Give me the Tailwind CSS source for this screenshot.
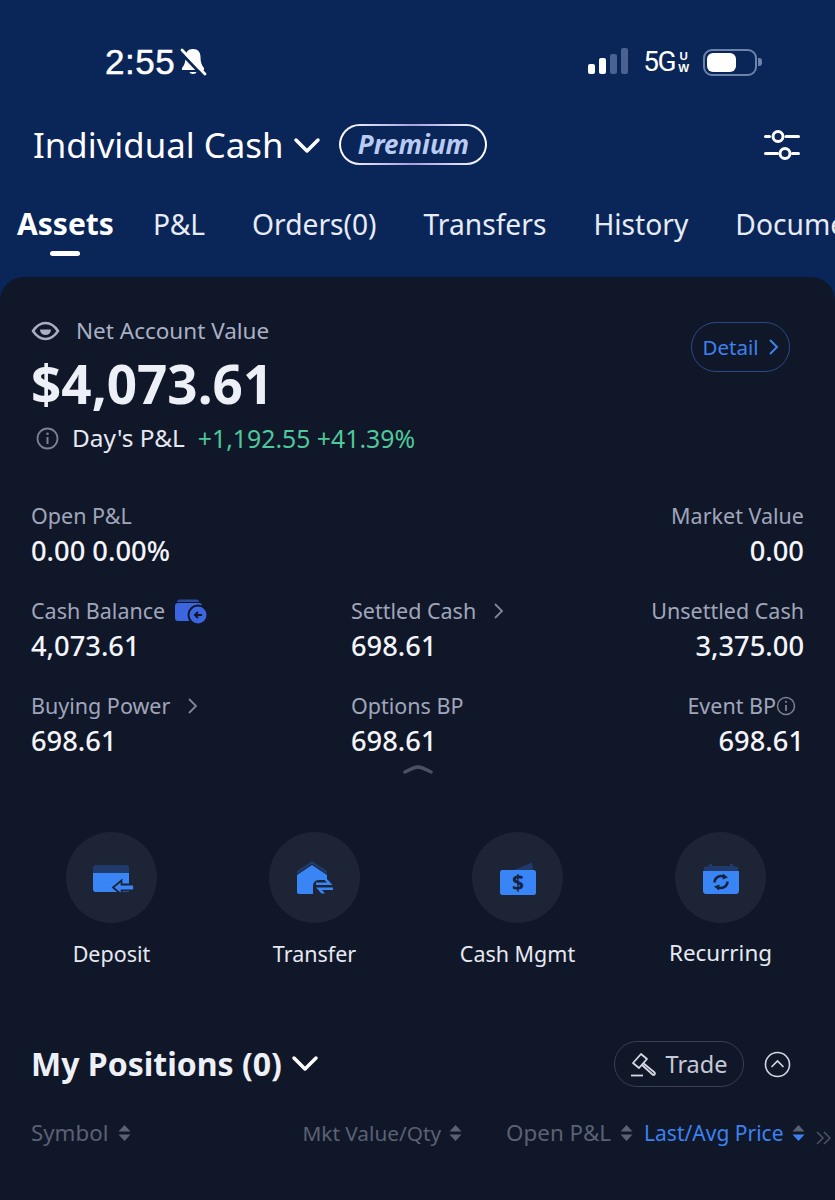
<!DOCTYPE html>
<html lang="en">
<head>
    <meta charset="UTF-8">
    <meta name="viewport" content="width=device-width, initial-scale=1.0">
    <title>Individual Cash - Assets</title>
    <script src="https://cdn.jsdelivr.net/npm/@tailwindcss/browser@4"></script>
</head>
<body class="bg-[#0a2558] font-['Noto_Sans',sans-serif] text-white">
<div class="w-[835px] h-[1200px] overflow-hidden flex flex-col">

    <!-- Status bar -->
    <div class="h-[100px] shrink-0 pl-[105px] pr-[73px] pt-[43px] flex items-start justify-between font-['Liberation_Sans',sans-serif]">
        <div class="flex items-center h-[38px] gap-[6px]">
            <span class="text-[35px] leading-[38px] text-white tracking-[0.5px] [-webkit-text-stroke:0.5px_white]">2:55</span>
            <svg width="28" height="30" viewBox="0 0 28 30" class="-ml-[2px]">
                <path d="M14 2c-5 0-7.500 3.500-7.500 8 0 5-1 8-3.500 11v2h22v-2c-2.500-3-3.500-6-3.500-11 0-4.500-2.500-8-7.500-8z" fill="#fff"/>
                <path d="M10.500 25h7c-.5 2.500-6.500 2.500-7 0z" fill="#fff"/>
                <path d="M1 5l22 23" stroke="#0a2558" stroke-width="3"/>
                <path d="M3 3l23 24" stroke="#fff" stroke-width="2.800" stroke-linecap="round"/>
            </svg>
        </div>
        <div class="flex items-center h-[38px]">
            <div class="flex items-end gap-[4px] h-[26px] mr-[15px] -mt-[2px]">
                <div class="w-[7px] h-[10px] rounded-[2px] bg-white"></div>
                <div class="w-[7px] h-[16px] rounded-[2px] bg-white"></div>
                <div class="w-[7px] h-[20px] rounded-[2px] bg-[#4a6291]"></div>
                <div class="w-[7px] h-[26px] rounded-[2px] bg-[#4a6291]"></div>
            </div>
            <span class="font-['Roboto',sans-serif] text-[28px] leading-[38px] tracking-[-1.500px] text-white">5G</span>
            <span class="flex flex-col text-[11.500px] leading-[12px] font-bold ml-[3px] mr-[14px]"><span class="text-center">U</span><span>W</span></span>
            <div class="w-[54px] h-[27px] rounded-[9px] border-[2px] border-[#6d82aa] p-[2px]">
                <div class="w-[29px] h-[19px] rounded-[6px] bg-white"></div>
            </div>
            <div class="w-[4px] h-[8px] rounded-r-[3px] bg-[#6d82aa] ml-[1px]"></div>
        </div>
    </div>

    <!-- Account title -->
    <div class="h-[90px] shrink-0 pl-[33px] pr-[35px] flex items-center">
        <span class="text-[34.800px] leading-[90px] text-white">Individual Cash</span>
        <svg width="28" height="18" viewBox="0 0 28 18" class="ml-[10px] mt-[2px]">
            <path d="M3 3l11 11L25 3" fill="none" stroke="#fff" stroke-width="3.500" stroke-linecap="round" stroke-linejoin="round"/>
        </svg>
        <div class="ml-[18px] -mt-[2px] w-[148px] h-[41px] rounded-[21px] p-[2px] bg-linear-to-r from-white via-[#a99fe0] to-white">
            <div class="w-full h-full rounded-[19px] bg-[#0a2558] flex items-center justify-center">
                <span class="text-[26px] leading-[37px] font-bold italic text-[#b9cbf2]">Premium</span>
            </div>
        </div>
        <svg width="36" height="30" viewBox="0 0 36 30" class="ml-auto">
            <path d="M1.500 6.500h4M22 6.500h12.500M1.500 23.500h12M28.500 23.500h6" stroke="#fff" stroke-width="3" stroke-linecap="round"/>
            <circle cx="14" cy="6.500" r="5" fill="none" stroke="#fff" stroke-width="3"/>
            <circle cx="21" cy="23.500" r="5" fill="none" stroke="#fff" stroke-width="3"/>
        </svg>
    </div>

    <!-- Tabs -->
    <div class="h-[87px] shrink-0 pl-[17px] flex gap-[47px] whitespace-nowrap overflow-hidden text-[28.200px] leading-[40px] pt-[14px] text-[#e6ebf5]">
        <div class="relative font-bold text-[30px] text-white -mr-[8px]">Assets
            <div class="absolute left-[33px] top-[47px] w-[30px] h-[5px] rounded-full bg-white"></div>
        </div>
        <div>P&amp;L</div>
        <div>Orders(0)</div>
        <div>Transfers</div>
        <div>History</div>
        <div>Documents</div>
    </div>

    <!-- Card -->
    <div class="flex-1 bg-[#101729] rounded-t-[24px] pl-[31px] pr-[31px]">

        <!-- Net account value -->
        <div class="flex justify-between items-start pt-[37px]">
            <div>
                <div class="flex items-center h-[34px]">
                    <svg width="29" height="20" viewBox="0 0 29 20">
                        <path d="M2 10C6 4 10 2 14.500 2S23 4 27 10c-4 6-8 8-12.500 8S6 16 2 10z" fill="none" stroke="#a9b0c4" stroke-width="2.500"/>
                        <path d="M9 8.500a5.500 5.500 0 0 0 11 0z" fill="#a9b0c4"/>
                    </svg>
                    <span class="ml-[16px] text-[22.500px] leading-[34px] text-[#a9b0c4]">Net Account Value</span>
                </div>
                <div class="text-[53px] leading-[64px] font-bold text-[#eef0f7] mt-[4px]">$4,073.61</div>
                <div class="flex items-center h-[40px] mt-[2px] ml-[5px]">
                    <svg width="23" height="23" viewBox="0 0 23 23">
                        <circle cx="11.500" cy="11.500" r="10" fill="none" stroke="#7b8194" stroke-width="1.800"/>
                        <path d="M11.500 10v7" stroke="#7b8194" stroke-width="2"/>
                        <circle cx="11.500" cy="6.800" r="1.300" fill="#7b8194"/>
                    </svg>
                    <span class="ml-[13px] text-[24.400px] leading-[40px] text-[#e6e9f2]">Day's P&amp;L</span>
                    <span class="ml-[13px] text-[24.800px] leading-[40px] text-[#4fc89b]">+1,192.55 +41.39%</span>
                </div>
            </div>
            <div class="mt-[8px] mr-[14px] w-[99px] h-[50px] rounded-[25px] border border-[#2a4a86] flex items-center justify-center gap-[9px]">
                <span class="text-[20.500px] leading-[30px] text-[#3b82f0]">Detail</span>
                <svg width="11" height="18" viewBox="0 0 11 18"><path d="M2 2l7 7-7 7" fill="none" stroke="#3b82f0" stroke-width="2"/></svg>
            </div>
        </div>

        <!-- Balances -->
        <div class="mt-[41px]">
            <div class="flex justify-between h-[95px]">
                <div>
                    <div class="text-[21.500px] leading-[34px] text-[#a0a6ba]">Open P&amp;L</div>
                    <div class="text-[27.300px] leading-[36px] font-medium text-[#f3f5fa]">0.00 0.00%</div>
                </div>
                <div class="text-right">
                    <div class="text-[21.500px] leading-[34px] text-[#a0a6ba]">Market Value</div>
                    <div class="text-[27.300px] leading-[36px] font-medium text-[#f3f5fa]">0.00</div>
                </div>
            </div>
            <div class="grid grid-cols-[320px_1fr_auto] h-[95px]">
                <div>
                    <div class="flex items-center text-[21.500px] leading-[34px] text-[#a0a6ba]">Cash Balance
                        <svg width="34" height="26" viewBox="0 0 34 26" class="ml-[9px] -mt-[1px]">
                            <path d="M3 4c0-1.500 1-2.500 2.500-2.500h17C24 1.500 25 2.500 25 4z" fill="#2d4a9a"/>
                            <path d="M1 8c0-2 1-3 3-3h21c2 0 3 1 3 3v12c0 2-1 3-3 3H4c-2 0-3-1-3-3z" fill="#3b66e0"/>
                            <circle cx="24" cy="17" r="9.500" fill="#3b66e0" stroke="#101729" stroke-width="2"/>
                            <path d="M28 17h-7m3-3l-3 3 3 3" fill="none" stroke="#101729" stroke-width="2"/>
                        </svg>
                    </div>
                    <div class="text-[27.300px] leading-[36px] font-medium text-[#f3f5fa]">4,073.61</div>
                </div>
                <div>
                    <div class="flex items-center text-[21.500px] leading-[34px] text-[#a0a6ba]">Settled Cash
                        <svg width="11" height="18" viewBox="0 0 11 18" class="ml-[17px]"><path d="M2 2l7 7-7 7" fill="none" stroke="#80869a" stroke-width="1.800"/></svg>
                    </div>
                    <div class="text-[27.300px] leading-[36px] font-medium text-[#f3f5fa]">698.61</div>
                </div>
                <div class="text-right">
                    <div class="text-[21.500px] leading-[34px] text-[#a0a6ba]">Unsettled Cash</div>
                    <div class="text-[27.300px] leading-[36px] font-medium text-[#f3f5fa]">3,375.00</div>
                </div>
            </div>
            <div class="grid grid-cols-[320px_1fr_auto]">
                <div>
                    <div class="flex items-center text-[21.500px] leading-[34px] text-[#a0a6ba]">Buying Power
                        <svg width="11" height="18" viewBox="0 0 11 18" class="ml-[17px]"><path d="M2 2l7 7-7 7" fill="none" stroke="#80869a" stroke-width="1.800"/></svg>
                    </div>
                    <div class="text-[27.300px] leading-[36px] font-medium text-[#f3f5fa]">698.61</div>
                </div>
                <div>
                    <div class="text-[21.500px] leading-[34px] text-[#a0a6ba]">Options BP</div>
                    <div class="text-[27.300px] leading-[36px] font-medium text-[#f3f5fa]">698.61</div>
                </div>
                <div class="text-right">
                    <div class="flex items-center justify-end text-[21.500px] leading-[34px] text-[#a0a6ba]">Event BP
                        <svg width="20" height="20" viewBox="0 0 20 20" class="mr-[8px]"><circle cx="10" cy="10" r="8.500" fill="none" stroke="#7b8194" stroke-width="1.500"/><path d="M10 9v6" stroke="#7b8194" stroke-width="1.800"/><circle cx="10" cy="5.800" r="1.100" fill="#7b8194"/></svg>
                    </div>
                    <div class="text-[27.300px] leading-[36px] font-medium text-[#f3f5fa]">698.61</div>
                </div>
            </div>
        </div>

        <!-- Collapse handle -->
        <div class="h-[10px] mt-[5px] pl-[372px]">
            <svg width="30" height="10" viewBox="0 0 30 10"><path d="M2 8c5-2 8-5 13-5s8 3 13 5" fill="none" stroke="#4b5266" stroke-width="3.500" stroke-linecap="round"/></svg>
        </div>

        <!-- Quick actions -->
        <div class="mt-[58px] pl-[35px] flex gap-[112px]">
            <div class="w-[91px] flex flex-col items-center">
                <div class="w-[91px] h-[91px] shrink-0 rounded-full bg-[#1d2436] flex items-center justify-center">
                    <svg width="44" height="34" viewBox="0 0 44 34">
                        <path d="M3 6.500C3 5 4 4 5.500 4h31C38 4 39 5 39 6.500V12H3z" fill="#1f3a6b"/>
                        <path d="M3 12h36v19H5.500C4 31 3 30 3 28.500z" fill="#3a85f5"/>
                        <path d="M23 26.500l8.500-7v4H44v6H31.500v4z" fill="#3a85f5" stroke="#1d2436" stroke-width="1.800"/>
                    </svg>
                </div>
                <span class="mt-[13px] text-[21.500px] leading-[36px] whitespace-nowrap text-[#e6e9f2]">Deposit</span>
            </div>
            <div class="w-[91px] flex flex-col items-center">
                <div class="w-[91px] h-[91px] shrink-0 rounded-full bg-[#1d2436] flex items-center justify-center">
                    <svg width="38" height="36" viewBox="0 0 38 36">
                        <path d="M1 11L16 1l15 10v3L16 4 1 14z" fill="#1f3a6b"/>
                        <path d="M1 15L16 5l15 10v5h-8c-4 0-6 3-6 6v8H3c-1.500 0-2-1-2-2z" fill="#3a85f5"/>
                        <path d="M20 22.500h11l-3-3h3.500l5 5.500H20z" fill="#3a85f5"/>
                        <path d="M37 27.500V30H26l3 3.500h-3.500l-5.500-6z" fill="#3a85f5"/>
                    </svg>
                </div>
                <span class="mt-[13px] text-[21.500px] leading-[36px] whitespace-nowrap text-[#e6e9f2]">Transfer</span>
            </div>
            <div class="w-[91px] flex flex-col items-center">
                <div class="w-[91px] h-[91px] shrink-0 rounded-full bg-[#1d2436] flex items-center justify-center">
                    <svg width="36" height="34" viewBox="0 0 36 34">
                        <path d="M14 9L32 1.500 33 9z" fill="#1f3a6b"/>
                        <rect x="0" y="9" width="36" height="25" rx="2.500" fill="#3a85f5"/>
                        <text x="18" y="29" text-anchor="middle" font-family="Noto Sans, sans-serif" font-weight="700" font-size="21" fill="#14233f">$</text>
                    </svg>
                </div>
                <span class="mt-[13px] text-[21.500px] leading-[36px] whitespace-nowrap text-[#e6e9f2]">Cash Mgmt</span>
            </div>
            <div class="w-[91px] flex flex-col items-center">
                <div class="w-[91px] h-[91px] shrink-0 rounded-full bg-[#1d2436] flex items-center justify-center">
                    <svg width="36" height="32" viewBox="0 0 36 32">
                        <path d="M1 9V5l5-1V2h3v2h18V2h3v2l5 1v4z" fill="#1f3a6b"/>
                        <path d="M0 9h36v20c0 1.500-1 3-3 3H3c-2 0-3-1.500-3-3z" fill="#3a85f5"/>
                        <path d="M11.500 20.500a6.500 6.500 0 0 1 10-5.500M24.500 19.500a6.500 6.500 0 0 1-10 5.500" fill="none" stroke="#14233f" stroke-width="2.500"/>
                        <path d="M20 11.500l5 4-5.500 2zM16 28.500l-5-4 5.500-2z" fill="#14233f"/>
                    </svg>
                </div>
                <span class="mt-[12px] text-[22.400px] leading-[36px] whitespace-nowrap text-[#e6e9f2]">Recurring</span>
            </div>
        </div>

        <!-- Positions -->
        <div class="mt-[67px] flex items-center h-[50px]">
            <span class="text-[32px] leading-[50px] font-bold text-[#eef0f7]">My Positions (0)</span>
            <svg width="28" height="18" viewBox="0 0 28 18" class="ml-[9px]"><path d="M3 3l11 11L25 3" fill="none" stroke="#fff" stroke-width="3.500" stroke-linecap="round" stroke-linejoin="round"/></svg>
            <div class="ml-auto w-[130px] h-[46px] rounded-[23px] border border-[#3a4052] flex items-center justify-center gap-[8px]">
                <svg width="27" height="25" viewBox="0 0 27 25" fill="none" stroke="#d6d9e3" stroke-width="1.800" stroke-linejoin="round">
                    <path d="M3 11l8-9 6 5-8 9z"/>
                    <path d="M13 11l11 9c1 1 1 2 .5 2.500s-1.500.5-2.500-.5l-10-9"/>
                    <path d="M1 23.500h12"/>
                </svg>
                <span class="text-[23.500px] leading-[34px] text-[#c5c9d6]">Trade</span>
            </div>
            <svg width="27" height="27" viewBox="0 0 27 27" class="ml-[20px] mr-[13px]">
                <circle cx="13.500" cy="13.500" r="12" fill="none" stroke="#d6d9e3" stroke-width="1.600"/>
                <path d="M7.500 16l6-6 6 6" fill="none" stroke="#d6d9e3" stroke-width="1.600"/>
            </svg>
        </div>

        <!-- Table header -->
        <div class="mt-[24px] h-[40px] flex items-center whitespace-nowrap">
            <span class="text-[22.300px] leading-[40px] text-[#5b6173]">Symbol</span>
            <svg width="13" height="18" viewBox="0 0 13 18" class="ml-[10px] shrink-0"><path d="M6.500 1l6 6.500H.5zM6.500 17l6-6.500H.5z" fill="#5b6173"/></svg>
            <span class="ml-[171px] text-[20.800px] leading-[40px] text-[#5b6173]">Mkt Value/Qty</span>
            <svg width="13" height="18" viewBox="0 0 13 18" class="ml-[8px] shrink-0"><path d="M6.500 1l6 6.500H.5zM6.500 17l6-6.500H.5z" fill="#5b6173"/></svg>
            <span class="ml-[44px] text-[22.400px] leading-[40px] text-[#5b6173]">Open P&amp;L</span>
            <svg width="13" height="18" viewBox="0 0 13 18" class="ml-[9px] shrink-0"><path d="M6.500 1l6 6.500H.5zM6.500 17l6-6.500H.5z" fill="#5b6173"/></svg>
            <span class="ml-[11px] text-[21px] leading-[40px] text-[#3b82f0]">Last/Avg Price</span>
            <svg width="13" height="18" viewBox="0 0 13 18" class="ml-[8px] shrink-0"><path d="M6.500 1l6 6.500H.5z" fill="#5b6173"/><path d="M6.500 17l6-6.500H.5z" fill="#3b82f0"/></svg>
            <svg width="16" height="14" viewBox="0 0 16 14" class="ml-[11px] mt-[10px] shrink-0"><path d="M1 1l6 6-6 6M8 1l6 6-6 6" fill="none" stroke="#4b5266" stroke-width="1.500"/></svg>
        </div>
    </div>
</div>
</body>
</html>
